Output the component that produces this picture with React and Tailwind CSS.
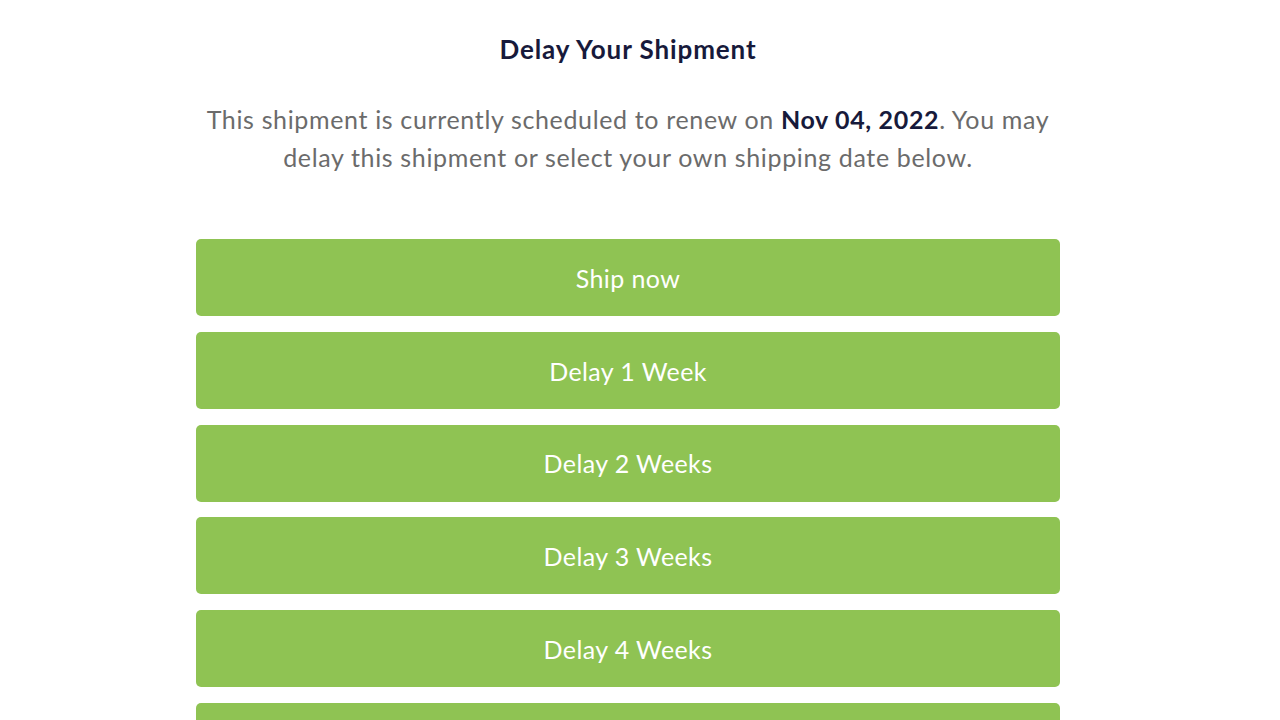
export default function App() {
  const buttons = ["Ship now", "Delay 1 Week", "Delay 2 Weeks", "Delay 3 Weeks", "Delay 4 Weeks", "Delay 5 Weeks"];
  return (
    <div className="w-[1280px] h-[720px] overflow-hidden bg-white" style={{ fontFamily: "Lato, 'Noto Sans', sans-serif" }}>
      <div className="ml-[196px] w-[864px] flex flex-col items-center">
        <h1 className="mt-[33px] h-[32px] leading-[32px] text-[26px] tracking-[0.9px] font-bold text-[#171a3b]">Delay Your Shipment</h1>
        <p className="mt-[35px] text-center text-[25px] tracking-[0.65px] leading-[38px] text-[#6b6b6b]">
          This shipment is currently scheduled to renew on <span className="font-bold text-[#171a3b]">Nov 04, 2022</span>. You may
          <br />
          delay this shipment or select your own shipping date below.
        </p>
        <div className="mt-[63px] w-full flex flex-col gap-[15.8px]">
          {buttons.map((b) => (
            <button key={b} className="w-full h-[77px] shrink-0 rounded-[5px] bg-[#8fc353] text-white text-[25px] tracking-[0.4px] pt-[2px] flex items-center justify-center">
              {b}
            </button>
          ))}
        </div>
      </div>
    </div>
  );
}
